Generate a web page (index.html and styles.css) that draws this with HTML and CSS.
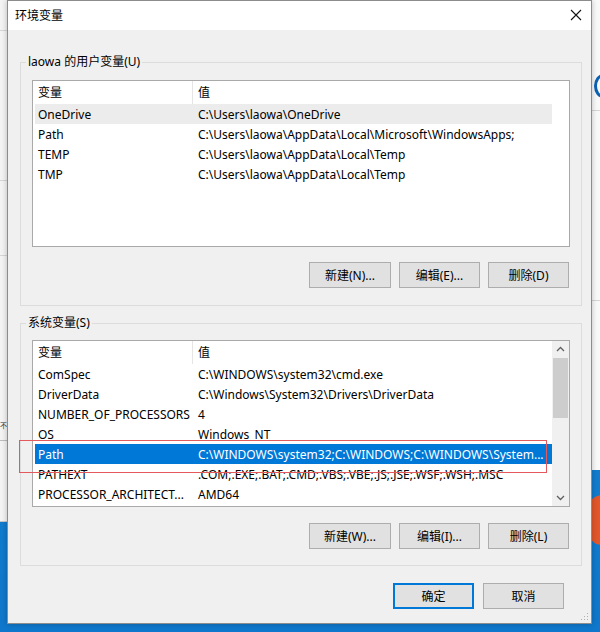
FILE: index.html
```html
<!DOCTYPE html>
<html lang="zh-CN">
<head>
<meta charset="utf-8">
<title>环境变量</title>
<link rel="stylesheet" href="styles.css">
</head>
<body>
<div class="screen">
  <div class="behind-left">
    <div class="bl-line l1"></div>
    <div class="bl-line l2"></div>
    <div class="bl-line l3"></div>
    <div class="bl-line l4"></div>
    <div class="bl-char">不</div>
  </div>
  <div class="behind-right">
    <div class="br-logo"></div>
    <div class="bl-line r1"></div>
    <div class="bl-line r2"></div>
  </div>
  <div class="orange-blob"></div>

  <div class="dialog">
    <div class="titlebar">
      <span class="title">环境变量</span>
      <svg class="close" width="12" height="12" viewBox="0 0 12 12"><path d="M1 1 L11 11 M11 1 L1 11" stroke="#111" stroke-width="1.1" fill="none"/></svg>
    </div>
    <div class="body">
      <fieldset class="group g1">
        <legend>laowa 的用户变量(U)</legend>
        <div class="list">
          <div class="rows">
            <div class="row head"><span class="c1">变量</span><span class="c2">值</span></div>
            <div class="row hot"><span class="c1">OneDrive</span><span class="c2">C:\Users\laowa\OneDrive</span></div>
            <div class="row"><span class="c1">Path</span><span class="c2">C:\Users\laowa\AppData\Local\Microsoft\WindowsApps;</span></div>
            <div class="row"><span class="c1">TEMP</span><span class="c2">C:\Users\laowa\AppData\Local\Temp</span></div>
            <div class="row"><span class="c1">TMP</span><span class="c2">C:\Users\laowa\AppData\Local\Temp</span></div>
          </div>
        </div>
        <div class="btns">
          <button class="btn">新建(N)...</button>
          <button class="btn">编辑(E)...</button>
          <button class="btn">删除(D)</button>
        </div>
      </fieldset>

      <fieldset class="group g2">
        <legend>系统变量(S)</legend>
        <div class="list">
          <div class="rows">
            <div class="row head"><span class="c1">变量</span><span class="c2">值</span></div>
            <div class="row"><span class="c1">ComSpec</span><span class="c2">C:\WINDOWS\system32\cmd.exe</span></div>
            <div class="row"><span class="c1">DriverData</span><span class="c2">C:\Windows\System32\Drivers\DriverData</span></div>
            <div class="row"><span class="c1">NUMBER_OF_PROCESSORS</span><span class="c2">4</span></div>
            <div class="row"><span class="c1">OS</span><span class="c2">Windows_NT</span></div>
            <div class="row sel"><span class="c1">Path</span><span class="c2">C:\WINDOWS\system32;C:\WINDOWS;C:\WINDOWS\System...</span></div>
            <div class="row"><span class="c1">PATHEXT</span><span class="c2">.COM;.EXE;.BAT;.CMD;.VBS;.VBE;.JS;.JSE;.WSF;.WSH;.MSC</span></div>
            <div class="row"><span class="c1">PROCESSOR_ARCHITECT...</span><span class="c2">AMD64</span></div>
          </div>
          <div class="scrollbar">
            <svg class="arrow" width="17" height="17" viewBox="0 0 17 17"><path d="M5 10 L8.5 6.5 L12 10" stroke="#606060" stroke-width="1.3" fill="none"/></svg>
            <div class="track"><div class="thumb"></div></div>
            <svg class="arrow" width="17" height="17" viewBox="0 0 17 17"><path d="M5 7 L8.5 10.5 L12 7" stroke="#606060" stroke-width="1.3" fill="none"/></svg>
          </div>
        </div>
        <div class="btns">
          <button class="btn">新建(W)...</button>
          <button class="btn">编辑(I)...</button>
          <button class="btn">删除(L)</button>
        </div>
        <div class="mark"></div>
      </fieldset>

      <div class="footer">
        <button class="btn default">确定</button>
        <button class="btn">取消</button>
      </div>
    </div>
    <svg class="grip" width="8" height="8" viewBox="0 0 8 8">
      <rect x="6" y="0" width="1" height="1" fill="#b0b0b0"/>
      <rect x="3" y="3" width="1" height="1" fill="#b0b0b0"/>
      <rect x="6" y="3" width="1" height="1" fill="#b0b0b0"/>
      <rect x="0" y="6" width="1" height="1" fill="#b0b0b0"/>
      <rect x="3" y="6" width="1" height="1" fill="#b0b0b0"/>
      <rect x="6" y="6" width="1" height="1" fill="#b0b0b0"/>
    </svg>
  </div>
</div>
</body>
</html>
```

FILE: styles.css
```css
* { box-sizing: border-box; }
html, body { margin: 0; padding: 0; }
body {
  font-family: "Noto Sans", "Noto Sans CJK SC", sans-serif;
  font-size: 12px;
  color: #000;
}
.screen {
  position: relative;
  width: 600px;
  height: 632px;
  overflow: hidden;
  background: linear-gradient(180deg, #1a8ad8 0%, #0f78cc 100%);
}

/* windows behind the dialog */
.behind-left {
  position: absolute;
  left: -40px;
  top: 0;
  width: 48px;
  height: 522px;
  background: #f4f4f4;
  border-bottom: 1px solid #c8c8c8;
}
.bl-line { position: absolute; height: 1px; background: #d6d6d6; left: 0; right: 0; }
.l1 { top: 30px; }
.l2 { top: 180px; }
.l3 { top: 255px; }
.l4 { top: 440px; background: #bdbdbd; }
.bl-char {
  position: absolute;
  left: 40px;
  top: 422px;
  font-size: 7px;
  line-height: 8px;
  color: #333;
}
.behind-right {
  position: absolute;
  left: 590px;
  top: 0;
  width: 40px;
  height: 470px;
  background: #fafafa;
}
.r1 { top: 110px; }
.r2 { top: 300px; }
.br-logo {
  position: absolute;
  left: 4px;
  top: 74px;
  width: 18px;
  height: 24px;
  border: 3px solid #0a63b5;
  border-radius: 50%;
}
.orange-blob {
  position: absolute;
  left: 588px;
  top: 495px;
  width: 30px;
  height: 50px;
  border-radius: 14px;
  background: #e2572b;
}

/* dialog */
.dialog {
  position: absolute;
  left: 7px;
  top: 0;
  width: 585px;
  height: 624px;
  background: #f0f0f0;
  border: 1px solid #8c8c8c;
  box-shadow: 0 0 6px rgba(0,0,0,0.25);
  display: flex;
  flex-direction: column;
}
.titlebar {
  height: 29px;
  background: #fff;
  display: flex;
  align-items: center;
  justify-content: space-between;
  padding: 0 9px 1px 7px;
  flex: none;
}
.title { font-size: 12px; }
.close { display: block; margin-top: -1px; }

.body {
  padding: 24px 9px 0 12px;
  display: flex;
  flex-direction: column;
}

.group {
  margin: 0;
  border: 1px solid #dcdcdc;
  padding: 10px 11px 17px 11px;
  min-width: 0;
  position: relative;
}
.group legend {
  margin-left: -6px;
  padding: 0 2px;
  line-height: 16px;
  font-size: 12px;
}
.g2 { margin-top: 9px; padding-top: 9px; padding-bottom: 16px; }

.list {
  height: 167px;
  background: #fff;
  border: 1px solid #a9a9a9;
  display: flex;
}
.rows {
  flex: 1;
  padding-left: 2px;
  overflow: hidden;
}
.row {
  width: 517px;
  height: 20px;
  display: flex;
  align-items: center;
  white-space: nowrap;
}
.row .c1 { width: 158px; padding-left: 3px; flex: none; overflow: hidden; }
.row .c2 { padding-left: 5px; flex: none; }
.row.head { height: 23px; align-items: stretch; }
.row.head span { display: flex; align-items: center; padding-bottom: 2px; }
.row.head .c1 { border-right: 1px solid #e5e5e5; }
.row.head .c2 { padding-left: 5px; }
.row.hot { background: #ececec; }
.row.sel { background: #0078d7; color: #fff; }

.scrollbar {
  width: 17px;
  flex: none;
  background: #f0f0f0;
  display: flex;
  flex-direction: column;
}
.arrow { display: block; flex: none; }
.track { flex: 1; padding: 0 1px; }
.thumb { height: 60px; background: #cdcdcd; }

.btns {
  display: flex;
  justify-content: flex-end;
  gap: 8px;
  margin-top: 15px;
  padding-right: 1px;
}
.g2 .btns { margin-top: 16px; }
.btn {
  width: 82px;
  height: 26px;
  margin: 0;
  padding: 0;
  background: #e1e1e1;
  border: 1px solid #adadad;
  font-family: inherit;
  font-size: 12px;
  color: #000;
  border-radius: 0;
}
.btns .btn + .btn { width: 81px; }

.mark {
  position: absolute;
  left: -2px;
  top: 109px;
  width: 528px;
  height: 33px;
  border: 1px solid #e45a5c;
}

.footer {
  display: flex;
  justify-content: flex-end;
  gap: 9px;
  margin-top: 17px;
  padding-right: 18px;
}
.footer .btn { width: 81px; height: 26px; }
.btn.default { border-color: #0078d7; box-shadow: inset 0 0 0 1px #0078d7; }

.grip {
  position: absolute;
  right: 2px;
  bottom: 2px;
}
```
